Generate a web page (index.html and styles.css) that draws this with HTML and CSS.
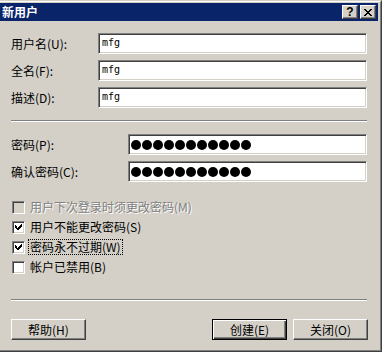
FILE: index.html
```html
<!DOCTYPE html>
<html lang="zh-CN">
<head>
  <meta charset="UTF-8">
  <title>新用户</title>
  <link rel="stylesheet" href="styles.css">
</head>
<body>
  <div class="window">
    <div class="frame">
      <div class="titlebar">
        <span class="title">新用户</span>
        <div class="caption-buttons">
          <div class="cap-btn help">?</div>
          <div class="cap-btn close">
            <svg width="8" height="7" viewBox="0 0 8 7" shape-rendering="crispEdges">
              <path d="M0 0h2v1h-2zM6 0h2v1h-2zM1 1h2v1h-2zM5 1h2v1h-2zM2 2h4v1h-4zM3 3h2v1h-2zM2 4h4v1h-4zM1 5h2v1h-2zM5 5h2v1h-2zM0 6h2v1h-2zM6 6h2v1h-2z" fill="#000"/>
            </svg>
          </div>
        </div>
      </div>

      <div class="content">
        <div class="fields names">
          <label>用户名(U):</label>
          <div class="edit">mfg</div>
          <label>全名(F):</label>
          <div class="edit">mfg</div>
          <label>描述(D):</label>
          <div class="edit">mfg</div>
        </div>

        <div class="separator"></div>

        <div class="fields passwords">
          <label>密码(P):</label>
          <div class="edit dots">
            <span></span><span></span><span></span><span></span><span></span><span></span>
            <span></span><span></span><span></span><span></span><span></span>
          </div>
          <label>确认密码(C):</label>
          <div class="edit dots">
            <span></span><span></span><span></span><span></span><span></span><span></span>
            <span></span><span></span><span></span><span></span><span></span>
          </div>
        </div>

        <div class="checks">
          <div class="check disabled">
            <div class="box"></div>
            <span class="check-label">用户下次登录时须更改密码(M)</span>
          </div>
          <div class="check">
            <div class="box">
              <svg width="9" height="9" viewBox="0 0 9 9" shape-rendering="crispEdges">
                <path d="M6 1h1v1h-1zM5 2h2v1h-2zM0 2h1v1h-1zM4 3h3v1h-3zM0 3h2v1h-2zM3 4h3v1h-3zM0 4h2v1h-2zM1 5h4v1h-4zM1 4h1v1h-1zM2 6h2v1h-2zM2 5h1v1h-1zM3 7h0z" fill="#000"/>
              </svg>
            </div>
            <span class="check-label">用户不能更改密码(S)</span>
          </div>
          <div class="check">
            <div class="box">
              <svg width="9" height="9" viewBox="0 0 9 9" shape-rendering="crispEdges">
                <path d="M6 1h1v1h-1zM5 2h2v1h-2zM0 2h1v1h-1zM4 3h3v1h-3zM0 3h2v1h-2zM3 4h3v1h-3zM0 4h2v1h-2zM1 5h4v1h-4zM1 4h1v1h-1zM2 6h2v1h-2zM2 5h1v1h-1z" fill="#000"/>
              </svg>
            </div>
            <span class="check-label focused">密码永不过期(W)</span>
          </div>
          <div class="check">
            <div class="box"></div>
            <span class="check-label">帐户已禁用(B)</span>
          </div>
        </div>

        <div class="separator bottom"></div>

        <div class="buttons">
          <div class="button">帮助(H)</div>
          <div class="button-group">
            <div class="button default">创建(E)</div>
            <div class="button">关闭(O)</div>
          </div>
        </div>
      </div>
    </div>
  </div>
</body>
</html>
```

FILE: styles.css
```css
:root {
  --face: #d4d0c8;
  --shadow: #808080;
  --dark: #404040;
  --light: #ffffff;
  --caption: #0a246a;
}

body {
  margin: 0;
  padding: 0;
  background: var(--face);
  font-family: "Noto Sans CJK SC", "Noto Sans", sans-serif;
  font-size: 12px;
  color: #000;
}

.window {
  width: 382px;
  height: 352px;
  box-sizing: border-box;
  background: var(--face);
  border-top: 1px solid var(--face);
  border-right: 1px solid var(--dark);
  border-bottom: 1px solid var(--dark);
}

.frame {
  height: 100%;
  box-sizing: border-box;
  border-top: 1px solid var(--light);
  border-right: 1px solid var(--shadow);
  border-bottom: 1px solid var(--shadow);
  padding: 1px 2px 2px 0;
}

.titlebar {
  height: 18px;
  background: var(--caption);
  display: flex;
  align-items: center;
  justify-content: space-between;
  margin-bottom: 1px;
}

.title {
  color: #fff;
  font-weight: bold;
  font-size: 12px;
  padding-left: 2px;
  line-height: 18px;
}

.caption-buttons {
  display: flex;
  gap: 2px;
  padding-right: 2px;
}

.cap-btn {
  width: 16px;
  height: 14px;
  box-sizing: border-box;
  background: var(--face);
  border-top: 1px solid var(--light);
  border-left: 1px solid var(--light);
  border-right: 1px solid var(--dark);
  border-bottom: 1px solid var(--dark);
  box-shadow: inset -1px -1px var(--shadow);
  display: flex;
  align-items: center;
  justify-content: center;
}

.cap-btn.help {
  font-family: "Liberation Sans", sans-serif;
  font-weight: bold;
  font-size: 12px;
  line-height: 12px;
}

.content {
  padding: 11px 11px 0 11px;
}

.fields {
  display: grid;
  row-gap: 6px;
  align-items: center;
}

.names {
  grid-template-columns: 87px 1fr;
}

.passwords {
  grid-template-columns: 117px 1fr;
}

label {
  line-height: 21px;
}

.edit {
  height: 21px;
  box-sizing: border-box;
  background: #fff;
  border-top: 1px solid var(--shadow);
  border-left: 1px solid var(--shadow);
  border-right: 1px solid var(--light);
  border-bottom: 1px solid var(--light);
  box-shadow: inset 1px 1px var(--dark), inset -1px -1px var(--face);
  padding: 0 3px;
  font-family: "DejaVu Sans Mono", monospace;
  font-size: 10px;
  line-height: 18px;
}

.dots {
  display: flex;
  align-items: center;
  gap: 1px;
  padding: 0 2px;
}

.dots span {
  width: 10px;
  height: 10px;
  border-radius: 50%;
  background: #000;
}

.separator {
  height: 1px;
  border-top: 1px solid var(--shadow);
  border-bottom: 1px solid var(--light);
  height: 0;
  margin: 12px 0 12px 0;
}

.checks {
  margin-top: 15px;
  padding-left: 1px;
}

.check {
  display: flex;
  align-items: center;
  height: 20px;
  gap: 4px;
}

.box {
  width: 13px;
  height: 13px;
  box-sizing: border-box;
  background: #fff;
  border-top: 1px solid var(--shadow);
  border-left: 1px solid var(--shadow);
  border-right: 1px solid var(--light);
  border-bottom: 1px solid var(--light);
  box-shadow: inset 1px 1px var(--dark), inset -1px -1px var(--face);
  display: flex;
  align-items: center;
  justify-content: center;
}

.box svg {
  margin: 1px 0 0 1px;
}

.check.disabled .box {
  background: var(--face);
}

.check.disabled .check-label {
  color: var(--shadow);
  text-shadow: 1px 1px var(--light);
}

.check-label {
  line-height: 14px;
  padding: 0 1px;
}

.check-label.focused {
  outline: 1px dotted #000;
}

.separator.bottom {
  margin: 22px 0 18px 0;
}

.buttons {
  display: flex;
  justify-content: space-between;
  padding-right: 0;
}

.button-group {
  display: flex;
  gap: 6px;
  margin-right: -1px;
}

.button {
  width: 75px;
  height: 21px;
  box-sizing: border-box;
  background: var(--face);
  border-top: 1px solid var(--light);
  border-left: 1px solid var(--light);
  border-right: 1px solid var(--dark);
  border-bottom: 1px solid var(--dark);
  box-shadow: inset -1px -1px var(--shadow), inset 1px 1px var(--face);
  text-align: center;
  line-height: 19px;
}

.button.default {
  border: 1px solid #000;
  box-shadow: inset 1px 1px var(--light), inset -1px -1px var(--dark), inset -2px -2px var(--shadow);
}
```
